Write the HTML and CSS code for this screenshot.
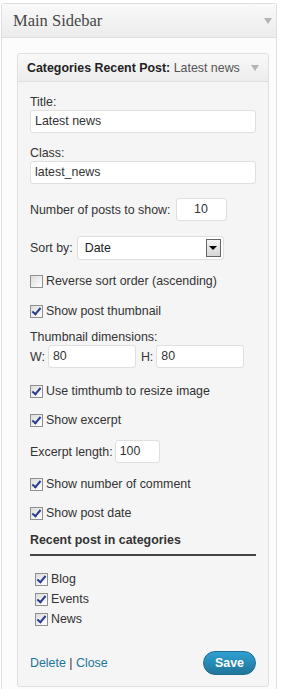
FILE: index.html
```html
<!DOCTYPE html>
<html>
<head>
<meta charset="utf-8">
<link rel="stylesheet" href="styles.css">
</head>
<body>
<div class="sidebar">
  <div class="sidebar-head">
    <span class="sidebar-title">Main Sidebar</span>
    <span class="tri"></span>
  </div>
  <div class="sidebar-body">
    <div class="widget">
      <div class="widget-head">
        <span class="widget-title"><b>Categories Recent Post:</b> <span class="in-title">Latest news</span></span>
        <span class="tri"></span>
      </div>
      <div class="widget-body">
        <div class="field">
          <div class="lbl">Title:</div>
          <div class="input wide">Latest news</div>
        </div>
        <div class="field">
          <div class="lbl">Class:</div>
          <div class="input wide">latest_news</div>
        </div>
        <div class="row num-row">
          <span>Number of posts to show:</span>
          <div class="input num">10</div>
        </div>
        <div class="row sort-row">
          <span>Sort by:</span>
          <div class="select">
            <span>Date</span>
            <span class="sel-btn"><span class="sel-tri"></span></span>
          </div>
        </div>
        <div class="check r-reverse"><span class="cb"></span><span>Reverse sort order (ascending)</span></div>
        <div class="check r-thumb"><span class="cb on"></span><span>Show post thumbnail</span></div>
        <div class="field dims">
          <div class="lbl">Thumbnail dimensions:</div>
          <div class="row">
            <span>W:</span><div class="input dim">80</div>
            <span class="hlbl">H:</span><div class="input dim">80</div>
          </div>
        </div>
        <div class="check r-tim"><span class="cb on"></span><span>Use timthumb to resize image</span></div>
        <div class="check r-exc"><span class="cb on"></span><span>Show excerpt</span></div>
        <div class="row exc-row">
          <span>Excerpt length:</span>
          <div class="input exc">100</div>
        </div>
        <div class="check r-com"><span class="cb on"></span><span>Show number of comment</span></div>
        <div class="check r-date"><span class="cb on"></span><span>Show post date</span></div>
        <div class="cat-head">Recent post in categories</div>
        <ul class="cats">
          <li class="check"><span class="cb on"></span><span>Blog</span></li>
          <li class="check"><span class="cb on"></span><span>Events</span></li>
          <li class="check"><span class="cb on"></span><span>News</span></li>
        </ul>
        <div class="actions">
          <div class="links"><a>Delete</a> <span class="sep">|</span> <a>Close</a></div>
          <div class="save">Save</div>
        </div>
      </div>
    </div>
  </div>
</div>
</body>
</html>
```

FILE: styles.css
```css
* { box-sizing: border-box; }
body {
  margin: 0;
  background: #ffffff;
  font-family: "Liberation Sans", Arial, sans-serif;
  font-size: 12.4px;
  color: #333333;
}
.sidebar {
  margin: 3px 0 0 1px;
  width: 276px;
  height: 686px;
  border: 1px solid #dfdfdf;
  border-bottom: none;
  border-radius: 3px 3px 0 0;
  background: #fcfcfc;
}
.sidebar-head {
  height: 34px;
  display: flex;
  align-items: center;
  justify-content: space-between;
  padding: 0 4px 0 11px;
  background: linear-gradient(#f9f9f9, #ececec);
  border-bottom: 1px solid #dfdfdf;
}
.sidebar-title {
  font-family: "Liberation Serif", Georgia, serif;
  font-size: 16.5px;
  color: #464646;
  padding-top: 1px;
}
.tri {
  width: 0;
  height: 0;
  border-left: 4px solid transparent;
  border-right: 4px solid transparent;
  border-top: 6px solid #b4b4b4;
}
.sidebar-body {
  padding: 15px 0 0 15px;
}
.widget {
  width: 252px;
  border: 1px solid #dfdfdf;
  border-radius: 3px;
  background: #f5f5f5;
}
.widget-head {
  height: 28px;
  display: flex;
  align-items: center;
  justify-content: space-between;
  padding: 0 9px 0 9px;
  background: linear-gradient(#f9f9f9, #ececec);
  border-bottom: 1px solid #dfdfdf;
  border-radius: 3px 3px 0 0;
}
.widget-title {
  font-size: 12.4px;
  color: #464646;
}
.widget-title b { color: #222; }
.in-title { color: #555; }
.widget-body {
  padding: 12px 0 11px 12px;
}
.lbl { line-height: 16px; }
.field { margin-bottom: 12px; }
.input {
  height: 23px;
  line-height: 21px;
  background: #fff;
  border: 1px solid #dfdfdf;
  border-radius: 3px;
  padding: 0 4px;
  color: #333;
}
.wide { width: 226px; }
.row {
  display: flex;
  align-items: center;
}
.num-row { margin-top: 14px; gap: 5px; }
.num { width: 51px; text-align: center; }
.sort-row { margin-top: 15px; gap: 4px; }
.select {
  width: 147px;
  height: 24px;
  background: #fff;
  border: 1px solid #dfdfdf;
  border-radius: 3px;
  display: flex;
  align-items: center;
  justify-content: space-between;
  padding: 0 2px 0 7px;
  color: #222;
}
.sel-btn {
  width: 15px;
  height: 18px;
  border: 1px solid #666;
  background: linear-gradient(#f4f4f4, #d6d6d6);
  display: flex;
  align-items: center;
  justify-content: center;
}
.sel-tri {
  width: 0;
  height: 0;
  border-left: 4px solid transparent;
  border-right: 4px solid transparent;
  border-top: 4px solid #000;
}
.check {
  display: flex;
  align-items: center;
  gap: 3px;
  line-height: 16px;
}
.cb {
  width: 13px;
  height: 13px;
  border: 1px solid #8e8f8f;
  background: linear-gradient(135deg, #dcdcdc, #ffffff);
  position: relative;
  flex: none;
}
.cb.on::after {
  content: "";
  position: absolute;
  left: 3px;
  top: 0px;
  width: 3px;
  height: 7px;
  border-right: 2px solid #2a3d8f;
  border-bottom: 2px solid #2a3d8f;
  transform: rotate(40deg);
}
.r-reverse { margin-top: 13px; }
.r-thumb { margin-top: 14px; }
.dims { margin-top: 10px; margin-bottom: 0; }
.dims .row { gap: 3px; margin-top: 0; }
.dim { width: 88px; }
.hlbl { margin-left: 2px; }
.r-tim { margin-top: 15px; }
.r-exc { margin-top: 13px; }
.exc-row { margin-top: 12px; gap: 2px; }
.exc { width: 45px; }
.r-com { margin-top: 13px; }
.r-date { margin-top: 13px; }
.cat-head {
  margin-top: 11px;
  font-weight: bold;
  line-height: 16px;
  width: 226px;
  padding-bottom: 6px;
  border-bottom: 2px solid #444;
  color: #333;
}
.cats {
  list-style: none;
  margin: 13px 0 0 5px;
  padding: 0;
}
.cats li { height: 20px; }
.actions {
  margin-top: 22px;
  width: 226px;
  display: flex;
  align-items: center;
  justify-content: space-between;
}
.links a { color: #21759b; }
.sep { color: #333; }
.save {
  width: 53px;
  height: 24px;
  border-radius: 12px;
  background: linear-gradient(#2e9fd2, #21759b);
  border: 1px solid #1f6d90;
  color: #fff;
  font-weight: bold;
  display: flex;
  align-items: center;
  justify-content: center;
}
```
